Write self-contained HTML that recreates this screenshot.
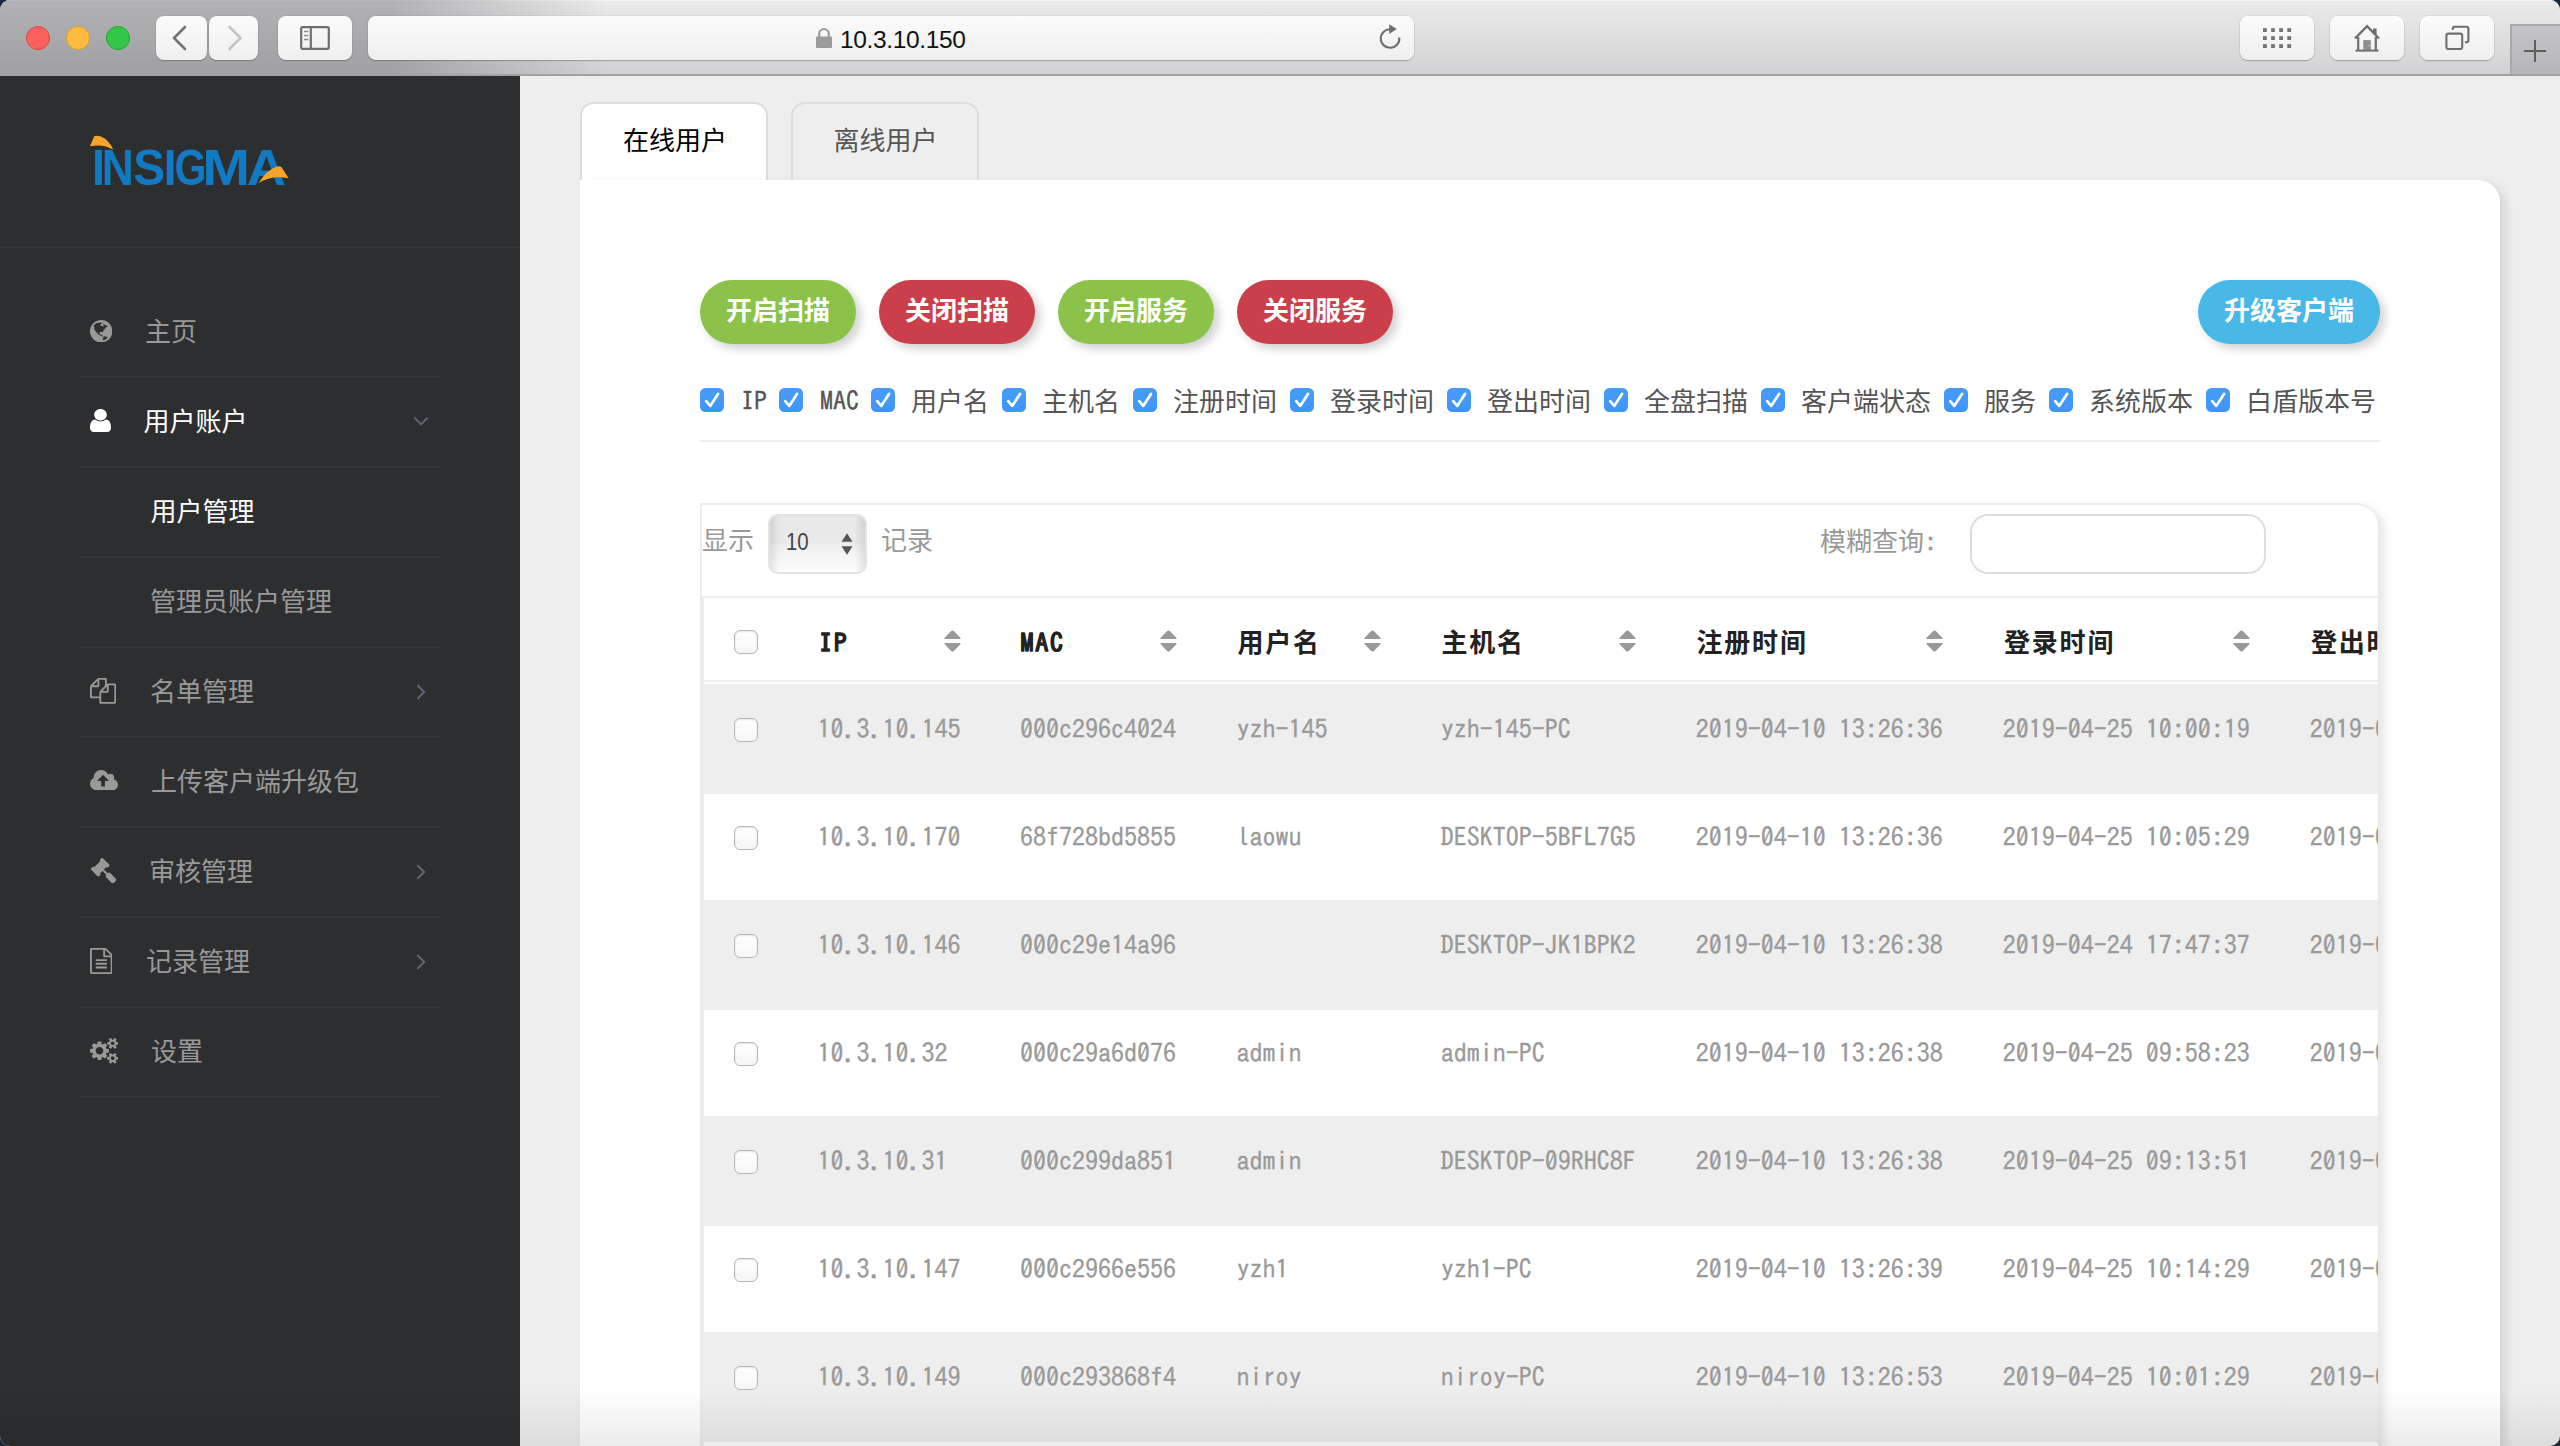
<!DOCTYPE html>
<html lang="zh-CN"><head><meta charset="utf-8"><title>10.3.10.150</title>
<style>
*{box-sizing:border-box;margin:0;padding:0}
html,body{width:2560px;height:1446px;overflow:hidden;background:#1b2838}
body{font-family:"Liberation Sans","Noto Sans CJK SC",sans-serif;font-size:26px;color:#999}
#win{position:absolute;left:0;top:0;width:2560px;height:1446px;border-radius:10px;overflow:hidden;background:#eee}
.ab,.ic,.t{position:absolute;display:block}
.t{white-space:nowrap;line-height:40px;height:40px}
.hw{font-family:"IPAGothic","Liberation Mono",monospace;-webkit-text-stroke:.3px}
/* toolbar */
#tb{left:0;top:0;width:2560px;height:74px;background:linear-gradient(#ecebec,#d2d1d3);box-shadow:inset 0 1px 0 rgba(255,255,255,.45)}
#tbd{left:0;top:0;width:700px;height:76px;background:linear-gradient(90deg,rgba(60,60,66,.33) 0,rgba(60,60,66,.33) 390px,rgba(60,60,66,0) 610px)}
#tbl{left:0;top:74px;width:2560px;height:2px;background:linear-gradient(#a9a9ab,#9b9b9d)}
.tl{width:24px;height:24px;border-radius:50%;top:26px;border:1px solid}
.btn{top:16px;height:44px;border-radius:8px;background:linear-gradient(#fbfbfb,#efefef);box-shadow:0 1px 1px rgba(0,0,0,.22),0 0 0 1px rgba(0,0,0,.05)}
/* sidebar */
#sb{left:0;top:76px;width:520px;height:1370px;background:#2d2e30}
.dv{left:80px;width:360px;height:2px;background:#34363a}
.m{color:#999}
.w{color:#fff}
/* main */
.tab{top:102px;height:80px;border:2px solid #ddd;border-bottom:none;border-radius:14px 14px 0 0}
#panel{left:580px;top:180px;width:1920px;height:1300px;background:#fff;border-top-right-radius:22px;box-shadow:6px 4px 10px rgba(0,0,0,.10)}
.pb{top:280px;height:64px;border-radius:32px;color:#fff;font-weight:bold;text-align:center;line-height:63px;box-shadow:5px 5px 10px rgba(0,0,0,.18)}
.cb{width:24px;height:24px;top:388px;border-radius:5.5px;background:linear-gradient(#479cf9,#3f95f7)}
.cl{color:#555}
.ub{width:24px;height:24px;border-radius:6px;background:linear-gradient(#fff,#f6f6f6);border:1.5px solid #b6b6b6;left:734px;box-shadow:inset 0 1px 2px rgba(0,0,0,.10)}
#tw{left:700px;top:503px;width:1678px;height:960px;border-top:2px solid #ececec;border-left:2px solid #ececec;border-top-right-radius:22px;box-shadow:6px 4px 10px rgba(0,0,0,.10);overflow:hidden;background:#fff}
.row{left:704px;width:1674px;height:108px;background:#eee}
.th{color:#222;font-weight:bold;letter-spacing:1.8px}
</style></head>
<body><div id="win">
<div id="tb" class="ab"></div><div id="tbd" class="ab"></div><div id="tbl" class="ab"></div>
<div class="ab tl" style="left:26px;background:#fc615d;border-color:#e0443e"></div>
<div class="ab tl" style="left:66px;background:#fdbc40;border-color:#dea123"></div>
<div class="ab tl" style="left:106px;background:#34c84a;border-color:#1aab29"></div>
<div class="ab btn" style="left:156px;width:51px"></div>
<div class="ab btn" style="left:209px;width:49px"></div>
<div class="ab btn" style="left:278px;width:74px"></div>
<div class="ab btn" style="left:368px;width:1046px"></div>
<div class="ab btn" style="left:2240px;width:74px"></div>
<div class="ab btn" style="left:2330px;width:74px"></div>
<div class="ab btn" style="left:2420px;width:74px"></div>
<svg class="ic" style="left:156px;top:16px" width="51" height="44" viewBox="0 0 51 44"><path d="M29 11 L18 22 L29 33" fill="none" stroke="#737373" stroke-width="2.6" stroke-linecap="round" stroke-linejoin="round"/></svg>
<svg class="ic" style="left:209px;top:16px" width="49" height="44" viewBox="0 0 49 44"><path d="M20.5 11 L31.5 22 L20.5 33" fill="none" stroke="#c4c4c4" stroke-width="2.6" stroke-linecap="round" stroke-linejoin="round"/></svg>
<svg class="ic" style="left:278px;top:16px" width="74" height="44" viewBox="0 0 74 44"><rect x="23.2" y="11.2" width="27.6" height="21.6" rx="1.5" fill="none" stroke="#6e6e6e" stroke-width="2.2"/><path d="M32.8 11v22" stroke="#6e6e6e" stroke-width="2.2"/><path d="M26 15.5h4.4M26 19.5h4.4M26 23.5h4.4" stroke="#8a8a8a" stroke-width="1.6"/></svg>
<svg class="ic" style="left:815px;top:27px" width="18" height="22" viewBox="0 0 18 22"><path d="M4.2 10V6.8a4.8 4.8 0 0 1 9.6 0V10" fill="none" stroke="#9b9b9b" stroke-width="2.2"/><rect x="1" y="9.5" width="16" height="11.5" rx="1" fill="#9b9b9b"/></svg>
<span class="t" id="url" style="left:840px;top:19.5px;color:#111;font-size:24.5px;letter-spacing:-.35px;font-family:'Liberation Sans',sans-serif">10.3.10.150</span>
<svg class="ic" style="left:1376px;top:22px" width="28" height="30" viewBox="0 0 28 30"><path d="M14.2 7.2 A9.3 9.3 0 1 0 23.3 15.5" fill="none" stroke="#6f6f6f" stroke-width="2.1"/><path d="M13.2 2.2 L20.8 7 L13.2 12 Z" fill="#6f6f6f"/></svg>
<svg class="ic" style="left:2240px;top:16px" width="74" height="44" viewBox="0 0 74 44"><rect x="23.0" y="12.2" width="3.8" height="3.8" fill="#727272"/><rect x="31.1" y="12.2" width="3.8" height="3.8" fill="#727272"/><rect x="39.2" y="12.2" width="3.8" height="3.8" fill="#727272"/><rect x="47.3" y="12.2" width="3.8" height="3.8" fill="#727272"/><rect x="23.0" y="20.2" width="3.8" height="3.8" fill="#727272"/><rect x="31.1" y="20.2" width="3.8" height="3.8" fill="#727272"/><rect x="39.2" y="20.2" width="3.8" height="3.8" fill="#727272"/><rect x="47.3" y="20.2" width="3.8" height="3.8" fill="#727272"/><rect x="23.0" y="28.2" width="3.8" height="3.8" fill="#727272"/><rect x="31.1" y="28.2" width="3.8" height="3.8" fill="#727272"/><rect x="39.2" y="28.2" width="3.8" height="3.8" fill="#727272"/><rect x="47.3" y="28.2" width="3.8" height="3.8" fill="#727272"/></svg>
<svg class="ic" style="left:2330px;top:16px" width="74" height="44" viewBox="0 0 74 44"><path d="M25 22.5 L37 10.2 L49 22.5" fill="none" stroke="#6e6e6e" stroke-width="2.4" stroke-linejoin="miter"/><path d="M43 12.5h3.6v7l-3.6-3.6z" fill="#6e6e6e"/><path d="M28.2 21v13.2M45.8 21v13.2" stroke="#6e6e6e" stroke-width="2.2"/><path d="M25.5 34.6h23" stroke="#6e6e6e" stroke-width="2"/><rect x="33.3" y="24.1" width="7.5" height="10" fill="#8e8e8e"/><circle cx="39.4" cy="29.5" r=".6" fill="#fff"/></svg>
<svg class="ic" style="left:2420px;top:16px" width="74" height="44" viewBox="0 0 74 44"><path d="M32.8 14v-1.2a2 2 0 0 1 2-2h11.6a2 2 0 0 1 2 2V24.2a2 2 0 0 1-2 2H45" fill="none" stroke="#6e6e6e" stroke-width="2.1"/><rect x="26.4" y="17.6" width="15.8" height="15.4" rx="2" fill="none" stroke="#6e6e6e" stroke-width="2.1"/></svg>
<div class="ab" style="left:2510px;top:24px;width:50px;height:50px;background:linear-gradient(#c4c3c5,#b6b5b7);border-left:2px solid #a9a9ab;border-top:2px solid #a9a9ab"></div>
<svg class="ic" style="left:2520px;top:36px" width="30" height="30" viewBox="0 0 30 30"><path d="M15 4v22M4 15h22" stroke="#5f5f5f" stroke-width="2"/></svg>
<div id="sb" class="ab"></div>
<svg class="ic" style="left:80px;top:126px" width="220" height="70" viewBox="80 126 220 70"><g font-family="'Liberation Sans',sans-serif" font-weight="bold" font-size="50.5" fill="#127ac2"><text y="185.3"><tspan x="92.09" textLength="12.92" lengthAdjust="spacingAndGlyphs">I</tspan><tspan x="101.94" textLength="31.94" lengthAdjust="spacingAndGlyphs">N</tspan><tspan x="133.22" textLength="31.84" lengthAdjust="spacingAndGlyphs">S</tspan><tspan x="163.88" textLength="12.54" lengthAdjust="spacingAndGlyphs">I</tspan><tspan x="174.72" textLength="31.81" lengthAdjust="spacingAndGlyphs">G</tspan><tspan x="202.16" textLength="47.77" lengthAdjust="spacingAndGlyphs">M</tspan><tspan x="246.74" textLength="39.40" lengthAdjust="spacingAndGlyphs">A</tspan></text></g><path d="M90 146.3 L94.2 136.2 Q97 135 101 136.6 Q109 140 113.2 149.6 Q103 143.4 90 146.3 Z" fill="#f6a42b"/><path d="M258.6 183 Q266 171 276 166.8 Q279.6 165.6 281.4 167 L288.6 178.3 Q272 174.5 258.6 183 Z" fill="#f6a42b"/></svg>
<div class="ab" style="left:0;top:246px;width:520px;height:2px;background:#333538"></div>
<div class="ab dv" style="top:376px"></div>
<div class="ab dv" style="top:466px"></div>
<div class="ab dv" style="top:556px"></div>
<div class="ab dv" style="top:646px"></div>
<div class="ab dv" style="top:736px"></div>
<div class="ab dv" style="top:826px"></div>
<div class="ab dv" style="top:916px"></div>
<div class="ab dv" style="top:1006px"></div>
<div class="ab dv" style="top:1096px"></div>
<svg class="ic" style="left:89.8px;top:319.5px;" width="22.4" height="22.4" viewBox="0.0 -1408.0 1536.0 1536.0" preserveAspectRatio="none"><path transform="scale(1,-1)" fill="#999" d="M768 1408C344 1408 0 1064 0 640C0 216 344 -128 768 -128C1192 -128 1536 216 1536 640C1536 1064 1192 1408 768 1408ZM1042 887C1053 894 1071 903 1085 899C1096 896 1105 892 1092 883C1086 879 1077 883 1070 881C1079 879 1092 875 1088 866C1114 851 1080 833 1063 835C1071 834 1046 819 1046 820C1037 815 1025 815 1018 806C1010 795 1021 776 1006 780C1000 767 977 774 967 760C978 748 956 731 945 746C935 742 940 731 930 725C934 719 935 713 928 709C930 710 942 700 945 699C943 694 939 690 934 690C939 677 928 663 919 655C909 647 886 639 883 637C865 620 853 595 885 588C886 588 886 555 887 554C889 542 894 507 873 520C863 525 857 553 854 564C851 576 850 576 842 588C829 573 827 584 816 591C805 597 789 595 783 601C768 590 757 593 754 610C750 602 758 590 757 587C752 577 743 579 735 585C722 595 694 578 679 585C680 585 684 581 687 579C684 567 677 574 671 570C664 565 658 555 652 550C665 525 651 501 652 474C652 454 665 419 684 408C693 403 723 401 732 405C746 411 744 422 749 434C754 447 760 453 775 454C818 456 785 421 780 403C777 390 776 375 774 363C779 361 784 362 789 362C789 366 792 371 792 374C798 364 818 361 824 373C831 361 845 352 847 338C849 324 862 309 843 309C829 309 845 281 847 276C858 256 876 248 896 258C896 250 893 228 882 226C872 224 853 245 857 256C856 252 853 249 850 247C840 259 823 265 814 277C812 280 785 321 791 323C777 317 749 327 736 334C715 345 712 374 686 370C668 367 663 360 642 368C628 373 616 383 602 390C586 399 558 408 552 428C546 444 548 463 539 478C533 488 515 508 502 508C514 508 491 538 488 541C477 554 437 589 445 609C447 612 425 620 421 621C425 611 426 600 431 591C436 581 442 572 448 562C459 544 474 522 472 500C459 496 463 515 459 523C452 536 433 536 428 550C430 551 431 551 433 552C434 569 409 583 413 595C399 606 399 627 389 641C380 654 365 660 352 669C347 672 311 718 324 721C304 716 294 763 297 775C297 775 295 775 295 776C299 788 292 850 308 851C297 850 294 877 297 882C299 886 314 871 315 869C321 872 327 880 325 887C322 895 311 902 304 908C301 910 261 936 260 935C264 942 263 949 257 954C238 939 248 968 238 971C234 972 230 975 226 979C284 1071 365 1148 461 1201C467 1202 475 1202 483 1202C501 1200 511 1185 524 1176C526 1181 522 1189 519 1194C522 1202 534 1204 541 1206C550 1207 563 1209 571 1205C565 1214 558 1222 551 1230C550 1229 547 1227 546 1225C535 1234 514 1222 504 1218C496 1214 489 1209 481 1206C476 1204 473 1204 469 1205C499 1221 530 1235 563 1246C569 1242 575 1235 584 1228C578 1233 578 1210 580 1206C591 1191 615 1201 630 1201C629 1201 674 1195 665 1206C672 1196 672 1181 681 1172C690 1181 677 1191 683 1200C685 1204 703 1209 709 1212C716 1217 704 1224 701 1226C691 1232 652 1235 671 1258C678 1266 703 1262 711 1257C722 1251 734 1240 719 1230C726 1229 759 1220 754 1207C757 1213 762 1222 770 1222C779 1221 781 1200 785 1195C799 1170 823 1220 827 1218C809 1225 843 1234 852 1231C859 1228 870 1204 857 1205C868 1195 869 1173 849 1174C835 1175 819 1194 806 1179C797 1169 793 1154 784 1145C770 1131 751 1132 734 1134C741 1133 719 1110 717 1106C711 1099 707 1091 705 1083C703 1073 705 1062 700 1052C717 1057 726 1026 719 1025C740 1028 757 1028 777 1021C791 1016 812 1010 818 995C822 1001 841 998 847 996C859 990 860 977 863 966C867 951 880 926 897 934C900 936 922 946 914 952C906 959 897 977 905 987C913 998 932 1001 937 1015C945 1038 913 1035 913 1052C913 1062 926 1065 925 1077C925 1087 910 1107 922 1114C932 1120 980 1110 989 1104C998 1098 1026 1090 1028 1081C1026 1081 1025 1081 1023 1081C1031 1074 1038 1059 1024 1055C1033 1057 1059 1047 1041 1041C1047 1044 1052 1042 1058 1046C1065 1050 1069 1057 1078 1052C1080 1051 1091 1073 1097 1072C1106 1071 1108 1058 1112 1052C1116 1043 1127 1040 1131 1031C1138 1014 1135 998 1158 992C1165 990 1184 1001 1183 986C1187 990 1189 993 1189 994C1190 980 1196 964 1213 966C1213 966 1213 947 1211 944C1205 935 1190 937 1181 932C1178 931 1154 910 1157 907C1144 922 1123 922 1106 918C1088 915 1071 913 1054 906C1046 902 1038 898 1032 891C1029 887 1024 869 1019 868C1029 870 1034 881 1042 887ZM879 10C878 15 877 25 877 26C876 42 893 53 892 68C881 71 878 82 880 94C882 111 897 123 909 134C921 145 924 168 921 182C916 206 916 231 912 255C913 249 930 251 933 243C937 250 939 259 944 266C948 272 955 274 961 279C971 285 992 308 1004 294C1014 282 989 269 1002 258C1006 266 1002 278 1010 286C1026 304 1037 284 1053 279C1070 274 1076 268 1089 257C1085 261 1105 268 1107 269C1126 273 1134 262 1147 252C1161 242 1183 235 1181 215C1191 213 1197 210 1205 207C1213 203 1224 205 1230 199C1138 102 1016 34 879 10Z"/></svg>
<svg class="ic" style="left:89.8px;top:409px;" width="21" height="23" viewBox="0.0 -1408.0 1280.0 1536.0" preserveAspectRatio="none"><path transform="scale(1,-1)" fill="#fff" d="M1280 137C1280 400 1215 704 953 704C872 625 762 576 640 576C518 576 408 625 327 704C65 704 0 400 0 137C0 -9 96 -128 213 -128H1067C1184 -128 1280 -9 1280 137ZM1024 1024C1024 1236 852 1408 640 1408C428 1408 256 1236 256 1024C256 812 428 640 640 640C852 640 1024 812 1024 1024Z"/></svg>
<svg class="ic" style="left:89.8px;top:678px;" width="26.2" height="25.8" viewBox="0.0 -1536.0 1792.0 1792.0" preserveAspectRatio="none"><path transform="scale(1,-1)" fill="#999" d="M1696 1152H1280C1241 1152 1191 1135 1152 1112V1440C1152 1493 1109 1536 1056 1536H640C587 1536 513 1505 476 1468L68 1060C31 1023 0 949 0 896V224C0 171 43 128 96 128H640V-160C640 -213 683 -256 736 -256H1696C1749 -256 1792 -213 1792 -160V1056C1792 1109 1749 1152 1696 1152ZM1152 939V640H853ZM512 1323V1024H213ZM708 676C671 639 640 565 640 512V256H128V896H544C597 896 640 939 640 992V1408H1024V992ZM1664 -128H768V512H1184C1237 512 1280 555 1280 608V1024H1664Z"/></svg>
<svg class="ic" style="left:89.8px;top:769.6px;" width="28" height="20.3" viewBox="0.0 -1408.0 1920.0 1408.0" preserveAspectRatio="none"><path transform="scale(1,-1)" fill="#999" d="M1280 672C1280 655 1266 640 1248 640H1024V288C1024 271 1009 256 992 256H800C783 256 768 271 768 288V640H544C526 640 512 654 512 672C512 681 516 689 522 696L873 1047C879 1053 888 1056 896 1056C905 1056 913 1053 919 1047L1271 695C1277 689 1280 680 1280 672ZM1920 384C1920 562 1797 717 1623 758C1650 799 1664 847 1664 896C1664 1037 1549 1152 1408 1152C1347 1152 1288 1130 1242 1090C1163 1282 976 1408 768 1408C485 1408 256 1179 256 896C256 882 257 868 258 853C101 780 0 622 0 448C0 201 201 0 448 0H1536C1748 0 1920 172 1920 384Z"/></svg>
<svg class="ic" style="left:90.6px;top:858px;" width="25.2" height="25.2" viewBox="40.0 -1496.0 1731.0 1731.0" preserveAspectRatio="none"><path transform="scale(1,-1)" fill="#999" d="M1771 0C1771 34 1757 67 1734 91L1371 454C1347 477 1314 491 1280 491C1242 491 1211 475 1184 448L928 704L1054 830C1063 839 1068 851 1068 864C1068 877 1063 889 1054 898C1084 868 1106 840 1152 840C1178 840 1201 850 1220 868C1256 902 1304 938 1304 992C1304 1017 1294 1042 1276 1060L868 1468C850 1486 825 1496 800 1496C746 1496 710 1448 676 1412C658 1393 648 1370 648 1344C648 1298 676 1276 706 1246C697 1255 685 1260 672 1260C659 1260 647 1255 638 1246L290 898C281 889 276 877 276 864C276 851 281 839 290 830C260 860 238 888 192 888C166 888 143 878 124 860C88 826 40 790 40 736C40 711 50 686 68 668L476 260C494 242 519 232 544 232C598 232 634 280 668 316C686 335 696 358 696 384C696 430 668 452 638 482C647 473 659 468 672 468C685 468 697 473 706 482L832 608L1088 352C1061 325 1045 294 1045 256C1045 222 1059 189 1083 166L1446 -198C1469 -221 1502 -235 1536 -235C1570 -235 1603 -221 1627 -198L1734 -90C1757 -67 1771 -34 1771 0Z"/></svg>
<svg class="ic" style="left:89.8px;top:947.7px;" width="22.6" height="26" viewBox="0.0 -1536.0 1536.0 1792.0" preserveAspectRatio="none"><path transform="scale(1,-1)" fill="#999" d="M1468 1156 1156 1468C1119 1505 1045 1536 992 1536H96C43 1536 0 1493 0 1440V-160C0 -213 43 -256 96 -256H1440C1493 -256 1536 -213 1536 -160V992C1536 1045 1505 1119 1468 1156ZM1024 1400C1041 1394 1058 1385 1065 1378L1378 1065C1385 1058 1394 1041 1400 1024H1024ZM1408 -128H128V1408H896V992C896 939 939 896 992 896H1408ZM384 736V672C384 654 398 640 416 640H1120C1138 640 1152 654 1152 672V736C1152 754 1138 768 1120 768H416C398 768 384 754 384 736ZM1120 512H416C398 512 384 498 384 480V416C384 398 398 384 416 384H1120C1138 384 1152 398 1152 416V480C1152 498 1138 512 1120 512ZM1120 256H416C398 256 384 242 384 224V160C384 142 398 128 416 128H1120C1138 128 1152 142 1152 160V224C1152 242 1138 256 1120 256Z"/></svg>
<svg class="ic" style="left:89.8px;top:1038px;" width="28.4" height="25.6" viewBox="0.0 -1520.0 1920.0 1761.0" preserveAspectRatio="none"><path transform="scale(1,-1)" fill="#999" d="M896 640C896 499 781 384 640 384C499 384 384 499 384 640C384 781 499 896 640 896C781 896 896 781 896 640ZM1664 128C1664 58 1607 0 1536 0C1466 0 1408 57 1408 128C1408 198 1466 256 1536 256C1606 256 1664 198 1664 128ZM1664 1152C1664 1082 1607 1024 1536 1024C1466 1024 1408 1081 1408 1152C1408 1222 1466 1280 1536 1280C1606 1280 1664 1222 1664 1152ZM1280 731C1280 745 1270 758 1256 761L1104 784C1095 812 1083 839 1070 866C1098 905 1128 941 1157 980C1161 986 1164 992 1164 999C1164 1027 1046 1135 1020 1159C1014 1164 1007 1167 999 1167C992 1167 985 1165 979 1160L861 1071C837 1083 812 1094 786 1102L763 1255C761 1269 747 1280 733 1280H547C533 1280 521 1270 517 1256C504 1207 499 1152 494 1102C467 1093 442 1083 417 1070L302 1160C296 1164 289 1167 281 1167C252 1167 140 1046 120 1019C115 1013 113 1006 113 999C113 992 116 985 120 979C152 941 182 904 210 864C197 839 186 814 178 788L23 764C10 762 0 747 0 734V549C0 535 10 522 24 520L176 496C185 468 197 441 211 414C182 375 152 338 123 300C119 294 116 288 116 281C116 252 234 145 260 121C266 116 273 113 281 113C288 113 296 115 301 120L419 209C443 197 468 186 494 178L517 25C519 11 533 0 547 0H733C747 0 759 10 763 24C776 73 781 128 786 179C813 187 838 197 863 210L978 120C984 116 991 113 999 113C1028 113 1140 235 1160 262C1165 267 1167 274 1167 281C1167 289 1164 295 1160 301C1128 339 1098 376 1070 416C1083 441 1094 466 1102 492L1257 516C1270 518 1280 533 1280 546ZM1920 198C1920 213 1791 227 1771 229C1763 247 1753 265 1741 281C1750 301 1792 401 1792 419C1792 421 1791 424 1788 426C1776 433 1669 496 1664 496L1658 494C1624 460 1594 421 1566 382C1556 383 1546 384 1536 384C1526 384 1516 383 1506 382C1496 397 1421 496 1408 496C1403 496 1296 432 1284 426C1281 424 1280 421 1280 419C1280 402 1322 301 1331 281C1319 265 1309 247 1301 229C1281 227 1152 213 1152 198V58C1152 43 1281 29 1301 27C1309 8 1319 -9 1331 -25C1322 -45 1280 -146 1280 -163C1280 -165 1281 -168 1284 -170C1296 -177 1403 -241 1408 -241C1421 -241 1496 -141 1506 -126C1516 -127 1526 -128 1536 -128C1546 -128 1556 -127 1566 -126C1576 -141 1651 -241 1664 -241C1669 -241 1776 -177 1788 -170C1791 -168 1792 -166 1792 -163C1792 -145 1750 -45 1741 -25C1753 -9 1763 8 1771 27C1791 29 1920 43 1920 58ZM1920 1222C1920 1237 1791 1251 1771 1253C1763 1271 1753 1289 1741 1305C1750 1325 1792 1425 1792 1443C1792 1445 1791 1448 1788 1450C1776 1457 1669 1520 1664 1520L1658 1518C1624 1484 1594 1445 1566 1406C1556 1407 1546 1408 1536 1408C1526 1408 1516 1407 1506 1406C1496 1421 1421 1520 1408 1520C1403 1520 1296 1456 1284 1450C1281 1448 1280 1445 1280 1443C1280 1426 1322 1325 1331 1305C1319 1289 1309 1271 1301 1253C1281 1251 1152 1237 1152 1222V1082C1152 1067 1281 1053 1301 1051C1309 1032 1319 1015 1331 999C1322 979 1280 878 1280 861C1280 859 1281 856 1284 854C1296 847 1403 783 1408 783C1421 783 1496 883 1506 898C1516 897 1526 896 1536 896C1546 896 1556 897 1566 898C1576 883 1651 783 1664 783C1669 783 1776 847 1788 854C1791 856 1792 858 1792 861C1792 879 1750 979 1741 999C1753 1015 1763 1032 1771 1051C1791 1053 1920 1067 1920 1082Z"/></svg>
<svg class="ic" style="left:412px;top:414px" width="18" height="14" viewBox="0 0 18 14"><path d="M2.4 3.6 L9 10.4 L15.6 3.6" fill="none" stroke="#5d6673" stroke-width="2"/></svg>
<svg class="ic" style="left:414px;top:682.5px" width="14" height="18" viewBox="0 0 14 18"><path d="M3.4 2.2 L10.2 9 L3.4 15.8" fill="none" stroke="#5d6673" stroke-width="2"/></svg>
<svg class="ic" style="left:414px;top:862.5px" width="14" height="18" viewBox="0 0 14 18"><path d="M3.4 2.2 L10.2 9 L3.4 15.8" fill="none" stroke="#5d6673" stroke-width="2"/></svg>
<svg class="ic" style="left:414px;top:952.5px" width="14" height="18" viewBox="0 0 14 18"><path d="M3.4 2.2 L10.2 9 L3.4 15.8" fill="none" stroke="#5d6673" stroke-width="2"/></svg>
<span class="t m" id="m0" style="left:145px;top:311.7px">主页</span>
<span class="t w" id="m1" style="left:143.5px;top:401.7px">用户账户</span>
<span class="t w" id="m2" style="left:150.5px;top:491.7px">用户管理</span>
<span class="t m" id="m3" style="left:150px;top:581.7px">管理员账户管理</span>
<span class="t m" id="m4" style="left:150px;top:671.7px">名单管理</span>
<span class="t m" id="m5" style="left:151px;top:761.7px">上传客户端升级包</span>
<span class="t m" id="m6" style="left:149px;top:851.7px">审核管理</span>
<span class="t m" id="m7" style="left:146px;top:941.7px">记录管理</span>
<span class="t m" id="m8" style="left:151px;top:1031.7px">设置</span>
<div class="ab tab" style="left:580px;width:188px;background:#fff"></div>
<div class="ab tab" style="left:791px;width:188px;background:#eee"></div>
<div id="panel" class="ab"></div>
<span class="t" id="tab1" style="left:623px;top:121px;color:#000">在线用户</span>
<span class="t" id="tab2" style="left:833.5px;top:121px;color:#555">离线用户</span>
<div class="ab pb" id="pb0" style="left:700px;width:156px;background:#8bc34a">开启扫描</div>
<div class="ab pb" id="pb1" style="left:879px;width:156px;background:#ca3f4a">关闭扫描</div>
<div class="ab pb" id="pb2" style="left:1058px;width:156px;background:#8bc34a">开启服务</div>
<div class="ab pb" id="pb3" style="left:1237px;width:156px;background:#ca3f4a">关闭服务</div>
<div class="ab pb" id="pb4" style="left:2198px;width:182px;background:#48b9e6">升级客户端</div>
<div class="ab cb" style="left:700px"><svg width="24" height="24" viewBox="0 0 24 24" style="display:block"><path d="M6.2 13.2 L10.2 17.9 L18 6" fill="none" stroke="#fff" stroke-width="2.7" stroke-linecap="round" stroke-linejoin="round"/></svg></div>
<span class="t cl hw" id="cl0" style="left:741px;top:380px">IP</span>
<div class="ab cb" style="left:779px"><svg width="24" height="24" viewBox="0 0 24 24" style="display:block"><path d="M6.2 13.2 L10.2 17.9 L18 6" fill="none" stroke="#fff" stroke-width="2.7" stroke-linecap="round" stroke-linejoin="round"/></svg></div>
<span class="t cl hw" id="cl1" style="left:820px;top:380px">MAC</span>
<div class="ab cb" style="left:871px"><svg width="24" height="24" viewBox="0 0 24 24" style="display:block"><path d="M6.2 13.2 L10.2 17.9 L18 6" fill="none" stroke="#fff" stroke-width="2.7" stroke-linecap="round" stroke-linejoin="round"/></svg></div>
<span class="t cl" id="cl2" style="left:911px;top:382px">用户名</span>
<div class="ab cb" style="left:1002px"><svg width="24" height="24" viewBox="0 0 24 24" style="display:block"><path d="M6.2 13.2 L10.2 17.9 L18 6" fill="none" stroke="#fff" stroke-width="2.7" stroke-linecap="round" stroke-linejoin="round"/></svg></div>
<span class="t cl" id="cl3" style="left:1042px;top:382px">主机名</span>
<div class="ab cb" style="left:1133px"><svg width="24" height="24" viewBox="0 0 24 24" style="display:block"><path d="M6.2 13.2 L10.2 17.9 L18 6" fill="none" stroke="#fff" stroke-width="2.7" stroke-linecap="round" stroke-linejoin="round"/></svg></div>
<span class="t cl" id="cl4" style="left:1173px;top:382px">注册时间</span>
<div class="ab cb" style="left:1290px"><svg width="24" height="24" viewBox="0 0 24 24" style="display:block"><path d="M6.2 13.2 L10.2 17.9 L18 6" fill="none" stroke="#fff" stroke-width="2.7" stroke-linecap="round" stroke-linejoin="round"/></svg></div>
<span class="t cl" id="cl5" style="left:1330px;top:382px">登录时间</span>
<div class="ab cb" style="left:1447px"><svg width="24" height="24" viewBox="0 0 24 24" style="display:block"><path d="M6.2 13.2 L10.2 17.9 L18 6" fill="none" stroke="#fff" stroke-width="2.7" stroke-linecap="round" stroke-linejoin="round"/></svg></div>
<span class="t cl" id="cl6" style="left:1487px;top:382px">登出时间</span>
<div class="ab cb" style="left:1604px"><svg width="24" height="24" viewBox="0 0 24 24" style="display:block"><path d="M6.2 13.2 L10.2 17.9 L18 6" fill="none" stroke="#fff" stroke-width="2.7" stroke-linecap="round" stroke-linejoin="round"/></svg></div>
<span class="t cl" id="cl7" style="left:1644px;top:382px">全盘扫描</span>
<div class="ab cb" style="left:1761px"><svg width="24" height="24" viewBox="0 0 24 24" style="display:block"><path d="M6.2 13.2 L10.2 17.9 L18 6" fill="none" stroke="#fff" stroke-width="2.7" stroke-linecap="round" stroke-linejoin="round"/></svg></div>
<span class="t cl" id="cl8" style="left:1801px;top:382px">客户端状态</span>
<div class="ab cb" style="left:1944px"><svg width="24" height="24" viewBox="0 0 24 24" style="display:block"><path d="M6.2 13.2 L10.2 17.9 L18 6" fill="none" stroke="#fff" stroke-width="2.7" stroke-linecap="round" stroke-linejoin="round"/></svg></div>
<span class="t cl" id="cl9" style="left:1984px;top:382px">服务</span>
<div class="ab cb" style="left:2049px"><svg width="24" height="24" viewBox="0 0 24 24" style="display:block"><path d="M6.2 13.2 L10.2 17.9 L18 6" fill="none" stroke="#fff" stroke-width="2.7" stroke-linecap="round" stroke-linejoin="round"/></svg></div>
<span class="t cl" id="cl10" style="left:2089px;top:382px">系统版本</span>
<div class="ab cb" style="left:2206px"><svg width="24" height="24" viewBox="0 0 24 24" style="display:block"><path d="M6.2 13.2 L10.2 17.9 L18 6" fill="none" stroke="#fff" stroke-width="2.7" stroke-linecap="round" stroke-linejoin="round"/></svg></div>
<span class="t cl" id="cl11" style="left:2246px;top:382px">白盾版本号</span>
<div class="ab" style="left:700px;top:440px;width:1680px;height:2px;background:#eee"></div>
<div id="tw" class="ab"></div>
<span class="t" id="show" style="left:702px;top:521px">显示</span>
<div class="ab" style="left:767.5px;top:514px;width:99px;height:60px;border-radius:10px;border:2px solid #e3e3e3;background:linear-gradient(90deg,rgba(0,0,0,.09),rgba(0,0,0,0) 11%,rgba(0,0,0,0) 89%,rgba(0,0,0,.09)),linear-gradient(#e8e8e8,#e9e9e9 48%,#efefef 53%,#fdfdfd)"></div>
<span class="t" id="sel" style="left:785.5px;top:522px;color:#444;font-size:23.5px;transform:scaleX(.87);transform-origin:0 0;font-family:'Liberation Sans',sans-serif">10</span>
<svg class="ic" style="left:839.5px;top:532px" width="14" height="24" viewBox="0 0 14 24"><path d="M7 1.2 L12.5 9.8 H1.5 Z M7 22.8 L12.5 14.2 H1.5 Z" fill="#555"/></svg>
<span class="t" id="rec" style="left:881px;top:521px">记录</span>
<span class="t" id="srch" style="left:1820px;top:521px">模糊查询<span class="hw">:</span></span>
<div class="ab" style="left:1970px;top:514px;width:296px;height:60px;border-radius:18px;border:2px solid #dedede;background:#fff"></div>
<div class="ab" style="left:702px;top:596px;width:1676px;height:2px;background:#eee"></div>
<div class="ab" style="left:702px;top:598px;width:2px;height:900px;background:#eee"></div>
<div class="ab" style="left:704px;top:680px;width:1674px;height:2px;background:#eee"></div>
<div class="ab ub" style="top:630px"></div>
<span class="t th hw" id="th0" style="left:819px;top:621.75px">IP</span>
<span class="t th hw" id="th1" style="left:1020.5px;top:621.75px">MAC</span>
<span class="t th" id="th2" style="left:1237.5px;top:622.5px">用户名</span>
<span class="t th" id="th3" style="left:1441.5px;top:622.5px">主机名</span>
<span class="t th" id="th4" style="left:1696.5px;top:622.5px">注册时间</span>
<span class="t th" id="th5" style="left:2004px;top:622.5px">登录时间</span>
<span class="t th" id="th6" style="left:2311px;top:622.5px;width:67px;overflow:hidden">登出时间</span>
<svg class="ic" style="left:943.5px;top:629.6px" width="17" height="22" viewBox="0 0 17 22"><path d="M8.5 0.4 Q9.2 0.4 9.8 1 L16.2 7.4 Q17.2 9 15.6 9 H1.4 Q-0.2 9 0.8 7.4 L7.2 1 Q7.8 0.4 8.5 0.4 Z M8.5 21.6 Q9.2 21.6 9.8 21 L16.2 14.6 Q17.2 13 15.6 13 H1.4 Q-0.2 13 0.8 14.6 L7.2 21 Q7.8 21.6 8.5 21.6 Z" fill="#999"/></svg>
<svg class="ic" style="left:1159.5px;top:629.6px" width="17" height="22" viewBox="0 0 17 22"><path d="M8.5 0.4 Q9.2 0.4 9.8 1 L16.2 7.4 Q17.2 9 15.6 9 H1.4 Q-0.2 9 0.8 7.4 L7.2 1 Q7.8 0.4 8.5 0.4 Z M8.5 21.6 Q9.2 21.6 9.8 21 L16.2 14.6 Q17.2 13 15.6 13 H1.4 Q-0.2 13 0.8 14.6 L7.2 21 Q7.8 21.6 8.5 21.6 Z" fill="#999"/></svg>
<svg class="ic" style="left:1363.5px;top:629.6px" width="17" height="22" viewBox="0 0 17 22"><path d="M8.5 0.4 Q9.2 0.4 9.8 1 L16.2 7.4 Q17.2 9 15.6 9 H1.4 Q-0.2 9 0.8 7.4 L7.2 1 Q7.8 0.4 8.5 0.4 Z M8.5 21.6 Q9.2 21.6 9.8 21 L16.2 14.6 Q17.2 13 15.6 13 H1.4 Q-0.2 13 0.8 14.6 L7.2 21 Q7.8 21.6 8.5 21.6 Z" fill="#999"/></svg>
<svg class="ic" style="left:1618.5px;top:629.6px" width="17" height="22" viewBox="0 0 17 22"><path d="M8.5 0.4 Q9.2 0.4 9.8 1 L16.2 7.4 Q17.2 9 15.6 9 H1.4 Q-0.2 9 0.8 7.4 L7.2 1 Q7.8 0.4 8.5 0.4 Z M8.5 21.6 Q9.2 21.6 9.8 21 L16.2 14.6 Q17.2 13 15.6 13 H1.4 Q-0.2 13 0.8 14.6 L7.2 21 Q7.8 21.6 8.5 21.6 Z" fill="#999"/></svg>
<svg class="ic" style="left:1925.5px;top:629.6px" width="17" height="22" viewBox="0 0 17 22"><path d="M8.5 0.4 Q9.2 0.4 9.8 1 L16.2 7.4 Q17.2 9 15.6 9 H1.4 Q-0.2 9 0.8 7.4 L7.2 1 Q7.8 0.4 8.5 0.4 Z M8.5 21.6 Q9.2 21.6 9.8 21 L16.2 14.6 Q17.2 13 15.6 13 H1.4 Q-0.2 13 0.8 14.6 L7.2 21 Q7.8 21.6 8.5 21.6 Z" fill="#999"/></svg>
<svg class="ic" style="left:2233px;top:629.6px" width="17" height="22" viewBox="0 0 17 22"><path d="M8.5 0.4 Q9.2 0.4 9.8 1 L16.2 7.4 Q17.2 9 15.6 9 H1.4 Q-0.2 9 0.8 7.4 L7.2 1 Q7.8 0.4 8.5 0.4 Z M8.5 21.6 Q9.2 21.6 9.8 21 L16.2 14.6 Q17.2 13 15.6 13 H1.4 Q-0.2 13 0.8 14.6 L7.2 21 Q7.8 21.6 8.5 21.6 Z" fill="#999"/></svg>
<div class="ab row" style="top:684px;height:110px"></div>
<div class="ab ub" style="top:718px"></div>
<span class="t hw" id="r0c0" style="left:817.5px;top:708px">10.3.10.145</span>
<span class="t hw" id="r0c1" style="left:1020px;top:708px">000c296c4024</span>
<span class="t hw" id="r0c2" style="left:1236.5px;top:708px">yzh-145</span>
<span class="t hw" id="r0c3" style="left:1440.7px;top:708px">yzh-145-PC</span>
<span class="t hw" id="r0c4" style="left:1695.7px;top:708px">2019-04-10 13:26:36</span>
<span class="t hw" id="r0c5" style="left:2002.7px;top:708px">2019-04-25 10:00:19</span>
<span class="t hw" style="left:2309.7px;top:708px;width:68.3px;overflow:hidden">2019-04-25</span>
<div class="ab ub" style="top:826px"></div>
<span class="t hw" id="r1c0" style="left:817.5px;top:816px">10.3.10.170</span>
<span class="t hw" id="r1c1" style="left:1020px;top:816px">68f728bd5855</span>
<span class="t hw" id="r1c2" style="left:1236.5px;top:816px">laowu</span>
<span class="t hw" id="r1c3" style="left:1440.7px;top:816px">DESKTOP-5BFL7G5</span>
<span class="t hw" id="r1c4" style="left:1695.7px;top:816px">2019-04-10 13:26:36</span>
<span class="t hw" id="r1c5" style="left:2002.7px;top:816px">2019-04-25 10:05:29</span>
<span class="t hw" style="left:2309.7px;top:816px;width:68.3px;overflow:hidden">2019-04-25</span>
<div class="ab row" style="top:900px;height:110px"></div>
<div class="ab ub" style="top:934px"></div>
<span class="t hw" id="r2c0" style="left:817.5px;top:924px">10.3.10.146</span>
<span class="t hw" id="r2c1" style="left:1020px;top:924px">000c29e14a96</span>
<span class="t hw" id="r2c3" style="left:1440.7px;top:924px">DESKTOP-JK1BPK2</span>
<span class="t hw" id="r2c4" style="left:1695.7px;top:924px">2019-04-10 13:26:38</span>
<span class="t hw" id="r2c5" style="left:2002.7px;top:924px">2019-04-24 17:47:37</span>
<span class="t hw" style="left:2309.7px;top:924px;width:68.3px;overflow:hidden">2019-04-25</span>
<div class="ab ub" style="top:1042px"></div>
<span class="t hw" id="r3c0" style="left:817.5px;top:1032px">10.3.10.32</span>
<span class="t hw" id="r3c1" style="left:1020px;top:1032px">000c29a6d076</span>
<span class="t hw" id="r3c2" style="left:1236.5px;top:1032px">admin</span>
<span class="t hw" id="r3c3" style="left:1440.7px;top:1032px">admin-PC</span>
<span class="t hw" id="r3c4" style="left:1695.7px;top:1032px">2019-04-10 13:26:38</span>
<span class="t hw" id="r3c5" style="left:2002.7px;top:1032px">2019-04-25 09:58:23</span>
<span class="t hw" style="left:2309.7px;top:1032px;width:68.3px;overflow:hidden">2019-04-25</span>
<div class="ab row" style="top:1116px;height:110px"></div>
<div class="ab ub" style="top:1150px"></div>
<span class="t hw" id="r4c0" style="left:817.5px;top:1140px">10.3.10.31</span>
<span class="t hw" id="r4c1" style="left:1020px;top:1140px">000c299da851</span>
<span class="t hw" id="r4c2" style="left:1236.5px;top:1140px">admin</span>
<span class="t hw" id="r4c3" style="left:1440.7px;top:1140px">DESKTOP-09RHC8F</span>
<span class="t hw" id="r4c4" style="left:1695.7px;top:1140px">2019-04-10 13:26:38</span>
<span class="t hw" id="r4c5" style="left:2002.7px;top:1140px">2019-04-25 09:13:51</span>
<span class="t hw" style="left:2309.7px;top:1140px;width:68.3px;overflow:hidden">2019-04-25</span>
<div class="ab ub" style="top:1258px"></div>
<span class="t hw" id="r5c0" style="left:817.5px;top:1248px">10.3.10.147</span>
<span class="t hw" id="r5c1" style="left:1020px;top:1248px">000c2966e556</span>
<span class="t hw" id="r5c2" style="left:1236.5px;top:1248px">yzh1</span>
<span class="t hw" id="r5c3" style="left:1440.7px;top:1248px">yzh1-PC</span>
<span class="t hw" id="r5c4" style="left:1695.7px;top:1248px">2019-04-10 13:26:39</span>
<span class="t hw" id="r5c5" style="left:2002.7px;top:1248px">2019-04-25 10:14:29</span>
<span class="t hw" style="left:2309.7px;top:1248px;width:68.3px;overflow:hidden">2019-04-25</span>
<div class="ab row" style="top:1332px;height:110px"></div>
<div class="ab ub" style="top:1366px"></div>
<span class="t hw" id="r6c0" style="left:817.5px;top:1356px">10.3.10.149</span>
<span class="t hw" id="r6c1" style="left:1020px;top:1356px">000c293868f4</span>
<span class="t hw" id="r6c2" style="left:1236.5px;top:1356px">niroy</span>
<span class="t hw" id="r6c3" style="left:1440.7px;top:1356px">niroy-PC</span>
<span class="t hw" id="r6c4" style="left:1695.7px;top:1356px">2019-04-10 13:26:53</span>
<span class="t hw" id="r6c5" style="left:2002.7px;top:1356px">2019-04-25 10:01:29</span>
<span class="t hw" style="left:2309.7px;top:1356px;width:68.3px;overflow:hidden">2019-04-25</span>
<div class="ab" style="left:0;top:1386px;width:2560px;height:60px;background:linear-gradient(rgba(0,0,0,0),rgba(0,0,0,.075))"></div>
</div></body></html>
